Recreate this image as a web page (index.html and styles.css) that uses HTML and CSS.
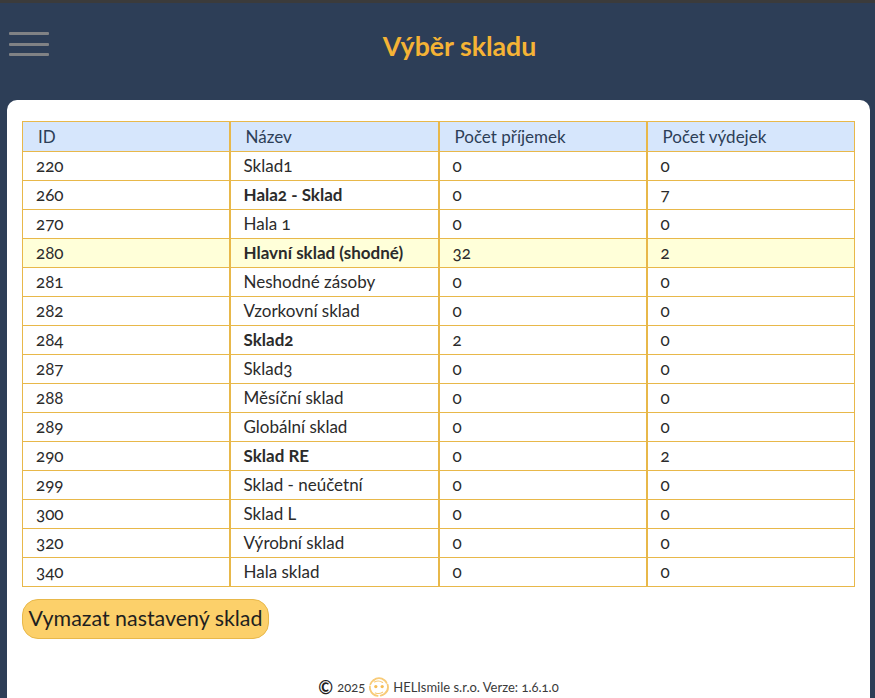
FILE: index.html
```html
<!DOCTYPE html>
<html lang="cs">
<head>
    <meta charset="UTF-8">
    <title>Výběr skladu</title>
    <link rel="stylesheet" href="styles.css">
</head>
<body>
    <!-- Header -->
    <div class="header">
        <div class="menu-icon"><span></span><span></span><span></span></div>
        <h1>Výběr skladu</h1>
    </div>

    <!-- Content -->
    <div class="content">
        <table class="store-table">
            <thead>
                <tr><th>ID</th><th>Název</th><th>Počet příjemek</th><th>Počet výdejek</th></tr>
            </thead>
            <tbody>
                <tr><td>220</td><td>Sklad1</td><td>0</td><td>0</td></tr>
                <tr><td>260</td><td class="strong">Hala2 - Sklad</td><td>0</td><td>7</td></tr>
                <tr><td>270</td><td>Hala 1</td><td>0</td><td>0</td></tr>
                <tr class="selected"><td>280</td><td class="strong">Hlavní sklad (shodné)</td><td>32</td><td>2</td></tr>
                <tr><td>281</td><td>Neshodné zásoby</td><td>0</td><td>0</td></tr>
                <tr><td>282</td><td>Vzorkovní sklad</td><td>0</td><td>0</td></tr>
                <tr><td>284</td><td class="strong">Sklad2</td><td>2</td><td>0</td></tr>
                <tr><td>287</td><td>Sklad3</td><td>0</td><td>0</td></tr>
                <tr><td>288</td><td>Měsíční sklad</td><td>0</td><td>0</td></tr>
                <tr><td>289</td><td>Globální sklad</td><td>0</td><td>0</td></tr>
                <tr><td>290</td><td class="strong">Sklad RE</td><td>0</td><td>2</td></tr>
                <tr><td>299</td><td>Sklad - neúčetní</td><td>0</td><td>0</td></tr>
                <tr><td>300</td><td>Sklad L</td><td>0</td><td>0</td></tr>
                <tr><td>320</td><td>Výrobní sklad</td><td>0</td><td>0</td></tr>
                <tr><td>340</td><td>Hala sklad</td><td>0</td><td>0</td></tr>
            </tbody>
        </table>

        <button class="clear-button" type="button">Vymazat nastavený sklad</button>

        <!-- Footer -->
        <div class="footer">
            <span class="copy">©</span>
            <span>2025</span>
            <svg class="logo" viewBox="0 0 22 22" width="20" height="20" fill="none" stroke="#f8cb78" stroke-width="2" stroke-linecap="round">
                <path d="M5 3.5C8.500 .6 13.500 .6 17 3.500c1 .8 1.800 1.800 2.300 2.900"/>
                <path d="M20.500 8.500c1 3.800-.2 7.600-3.300 10-1.300 1-2.800 1.700-4.300 2"/>
                <path d="M9.500 20.700c-3.700-.5-6.800-2.900-8-6.300-.5-1.300-.6-2.700-.5-4"/>
                <path d="M1.500 8C2.200 6.200 3.300 4.700 5 3.500"/>
                <path d="M6 5.500c2.800-1.500 6.500-1.300 9 .5" stroke-width="1.200"/>
                <path d="M7 17.500c2.500 1 5.500 .8 8-.8" stroke-width="1.200"/>
                <circle cx="7.500" cy="10.500" r="1.800" fill="#f6bd55" stroke="none"/>
                <circle cx="14.500" cy="10.500" r="1.800" fill="#f6bd55" stroke="none"/>
            </svg>
            <span>HELIsmile s.r.o. Verze: 1.6.1.0</span>
        </div>
    </div>
</body>
</html>
```

FILE: styles.css
```css
/* General Styles */
body {
    margin: 0;
    height: 698px;
    overflow: hidden;
    box-sizing: border-box;
    display: flex;
    flex-direction: column;
    background-color: #2d3e57;
    border-top: 3px solid #3b3b3b;
    font-family: 'Lato', 'Open Sans', sans-serif;
    font-variant-numeric: oldstyle-nums;
    color: #2b2b2b;
}

/* Header Styles */
.header {
    display: flex;
    height: 97px;
    padding-left: 9px;
    padding-right: 5px;
}

.menu-icon {
    width: 40px;
    padding-top: 29px;
    display: flex;
    flex-direction: column;
    gap: 7.5px;
}

.menu-icon span {
    display: block;
    height: 3px;
    border-radius: 1px;
    background-color: #808285;
}

.header h1 {
    flex: 1;
    margin: 0;
    padding-top: 28px;
    text-align: center;
    font-size: 26.7px;
    line-height: 30px;
    font-weight: 700;
    color: #f5b335;
}

/* Content Styles */
.content {
    flex: 1;
    margin: 0 5px 0 7px;
    padding: 21px 15px 0;
    background-color: #ffffff;
    border-radius: 10px 10px 0 0;
    display: flex;
    flex-direction: column;
    align-items: flex-start;
}

/* Table Styles */
.store-table {
    width: 833px;
    table-layout: fixed;
    border-collapse: collapse;
    font-size: 17px;
}

.store-table th,
.store-table td {
    border: 1px solid #e8b84a;
    border-left-width: 2px;
    text-align: left;
    padding: 0 0 2px 13px;
    height: 29px;
    box-sizing: border-box;
    font-weight: 400;
}

.store-table th {
    height: 30px;
    padding: 0 0 0 15px;
    background-color: #d6e6fc;
    color: #2d3e57;
}

.store-table th:first-child,
.store-table td:first-child {
    width: 207px;
    border-left-width: 1px;
}

.store-table th:nth-child(2) {
    width: 209px;
}

.store-table th:nth-child(3) {
    width: 208px;
}

.store-table .selected td {
    background-color: #ffffd9;
}

.store-table td.strong {
    font-weight: 700;
}

/* Button Styles */
.clear-button {
    margin-top: 12px;
    width: 247px;
    height: 40px;
    padding: 0 0 2px;
    font-family: inherit;
    font-size: 21.4px;
    color: #1f1f1f;
    background-color: #fcd06a;
    border: 1px solid #e8b84a;
    border-radius: 16px;
}

/* Footer Styles */
.footer {
    align-self: stretch;
    margin-top: 38px;
    display: flex;
    justify-content: center;
    align-items: center;
    gap: 4px;
    font-size: 13px;
    color: #3a3a3a;
}

.footer .copy {
    font-size: 18px;
    line-height: 18px;
    font-weight: 700;
    color: #1f1f1f;
}
```
